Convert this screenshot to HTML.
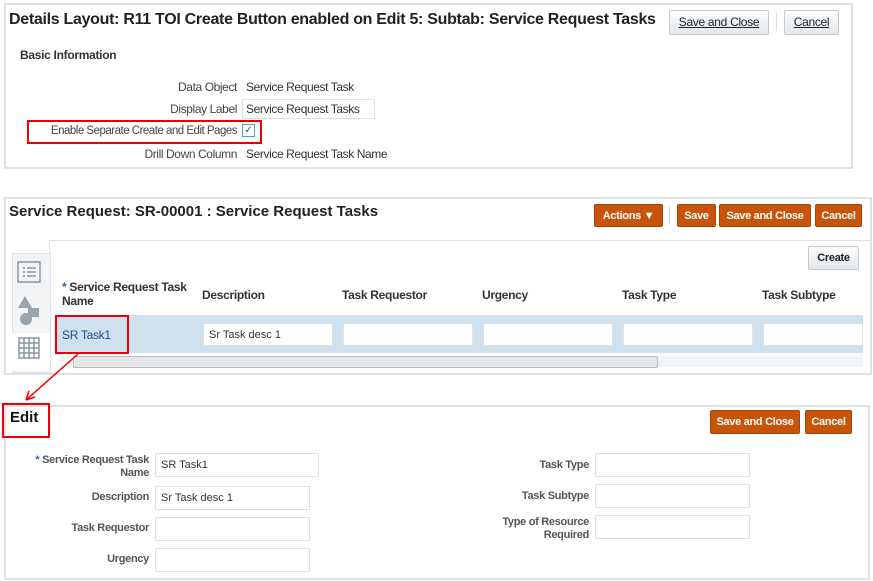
<!DOCTYPE html>
<html><head><style>
body{margin:0;width:873px;height:581px;background:#fff;font-family:"Liberation Sans",sans-serif;position:relative;overflow:hidden;font-size:12px;color:#333}
div{white-space:nowrap}
.a{position:absolute}
.pn{position:absolute;border:2px solid #dde2e6;background:#fff}
.gb{position:absolute;background:linear-gradient(#fbfcfd,#e4e8eb);border:1px solid #c4cbd1;border-radius:2px;font-size:12px;color:#222;text-align:center;line-height:22px;text-decoration:underline;letter-spacing:-0.3px}
.ob{position:absolute;background:#c75409;border:1px solid #a84608;border-radius:2px;color:#fff;font-size:11px;font-weight:bold;text-align:center;line-height:22px;letter-spacing:-0.3px}
.lb{position:absolute;text-align:right;font-size:12px;color:#444;letter-spacing:-0.4px}
.in{position:absolute;border:1px solid #dde2e6;background:#fff;font-size:11px;box-sizing:border-box;padding-left:5px}
.h{position:absolute;font-weight:bold;font-size:12px;color:#333;letter-spacing:-0.3px}
.l3{position:absolute;text-align:right;font-size:11px;font-weight:bold;color:#555;letter-spacing:-0.3px}
</style></head><body>
<div class="pn" style="left:4px;top:3px;width:845px;height:162px"></div>
<div class="a" style="left:9px;top:11px;font-size:16px;font-weight:bold;color:#222;letter-spacing:-0.3px">Details Layout: R11 TOI Create Button enabled on Edit 5: Subtab: Service Request Tasks</div>
<div class="gb" style="left:669px;top:10px;width:98px;height:23px">Save and Close</div>
<div class="a" style="left:776px;top:13px;width:1px;height:18px;background:#ddd"></div>
<div class="gb" style="left:784px;top:10px;width:53px;height:23px">Cancel</div>
<div class="a" style="left:20px;top:48px;font-size:12px;font-weight:bold;color:#333;letter-spacing:-0.3px">Basic Information</div>
<div class="lb" style="left:40px;width:197px;top:80px">Data Object</div><div class="a" style="left:246px;top:80px;letter-spacing:-0.4px">Service Request Task</div>
<div class="lb" style="left:40px;width:197px;top:102px">Display Label</div><div class="in" style="left:242px;top:99px;width:133px;height:20px;font-size:12px;padding-left:3px;line-height:18px;letter-spacing:-0.4px">Service Request Tasks</div>
<div class="lb" style="left:30px;width:207px;top:125px;font-size:11.5px;letter-spacing:-0.5px">Enable Separate Create and Edit Pages</div>
<div class="a" style="left:242px;top:124px;width:11px;height:11px;border:1px solid #7a8ea8;font-size:10px;line-height:11px;text-align:center;color:#2a4a8a">✓</div>
<div class="a" style="left:27px;top:120px;width:231px;height:20px;border:2px solid #e00"></div>
<div class="lb" style="left:40px;width:197px;top:147px">Drill Down Column</div><div class="a" style="left:246px;top:147px;letter-spacing:-0.4px">Service Request Task Name</div>

<div class="pn" style="left:4px;top:197px;width:864px;height:174px"></div>
<div class="a" style="left:9px;top:203px;font-size:15px;font-weight:bold;color:#222">Service Request: SR-00001 : Service Request Tasks</div>
<div class="ob" style="left:594px;top:204px;width:67px;height:21px">Actions ▼</div>
<div class="a" style="left:669px;top:207px;width:1px;height:17px;background:#ccc"></div>
<div class="ob" style="left:677px;top:204px;width:37px;height:21px">Save</div>
<div class="ob" style="left:719px;top:204px;width:90px;height:21px">Save and Close</div>
<div class="ob" style="left:815px;top:204px;width:45px;height:21px">Cancel</div>
<div class="a" style="left:49px;top:240px;width:821px;height:131px;border-top:1px solid #dde2e6;border-left:1px solid #dde2e6"></div>
<div class="a" style="left:12px;top:253px;width:37px;height:118px;background:#f2f4f5;border:1px solid #dde2e6"></div>
<div class="a" style="left:12px;top:333px;width:38px;height:38px;background:#fff"></div>
<svg class="a" style="left:15px;top:258px" width="30" height="110"><g fill="none" stroke="#8a97a3" stroke-width="1.5"><rect x="3" y="4" width="22" height="20"/><path d="M8 10h2M12 10h9M8 14h2M12 14h9M8 18h2M12 18h9"/><rect x="4" y="80" width="20" height="20"/><path d="M4 85h20M4 90h20M4 95h20M9 80v20M14 80v20M19 80v20"/></g><path d="M10 38l7 12h-14z" fill="#9aa4ad"/><rect x="13" y="50" width="11" height="9" fill="#9aa4ad"/><circle cx="11" cy="61" r="6" fill="#9aa4ad"/></svg>
<div class="gb" style="left:808px;top:246px;width:49px;height:22px;font-weight:bold;font-size:11px;text-decoration:none">Create</div>
<div class="h" style="left:62px;top:280px;width:135px;line-height:14px;white-space:normal"><span style="color:#2a6ab0">*</span> Service Request Task Name</div>
<div class="h" style="left:202px;top:288px">Description</div>
<div class="h" style="left:342px;top:288px">Task Requestor</div>
<div class="h" style="left:482px;top:288px">Urgency</div>
<div class="h" style="left:622px;top:288px">Task Type</div>
<div class="h" style="left:762px;top:288px">Task Subtype</div>
<div class="a" style="left:55px;top:315px;width:808px;height:38px;background:#cfe0ef"></div>
<div class="a" style="left:62px;top:328px;color:#1f4e8a;font-size:12px;letter-spacing:-0.3px">SR Task1</div>
<div class="in" style="left:203px;top:323px;width:130px;height:23px;line-height:22px">Sr Task desc 1</div>
<div class="in" style="left:343px;top:323px;width:130px;height:23px"></div>
<div class="in" style="left:483px;top:323px;width:130px;height:23px"></div>
<div class="in" style="left:623px;top:323px;width:130px;height:23px"></div>
<div class="in" style="left:763px;top:323px;width:100px;height:23px"></div>
<div class="a" style="left:55px;top:315px;width:70px;height:35px;border:2px solid #e00"></div>
<div class="a" style="left:60px;top:356px;width:803px;height:11px;background:#f3f4f5"></div>
<div class="a" style="left:73px;top:356px;width:583px;height:10px;background:#e6e8ea;border:1px solid #b8bcc0;border-radius:2px"></div>
<svg class="a" style="left:0;top:345px" width="120" height="62"><path d="M78 9L26 55" stroke="#e00" stroke-width="1.5"/><path d="M26 55l3-9M26 55l9-3" stroke="#e00" stroke-width="1.5" fill="none"/></svg>

<div class="pn" style="left:4px;top:405px;width:862px;height:171px"></div>
<div class="a" style="left:10px;top:409px;font-size:15px;font-weight:bold;color:#111">Edit</div>
<div class="a" style="left:2px;top:403px;width:44px;height:31px;border:2px solid #e00"></div>
<div class="ob" style="left:710px;top:410px;width:88px;height:22px">Save and Close</div>
<div class="ob" style="left:805px;top:410px;width:45px;height:22px">Cancel</div>
<div class="l3" style="left:20px;width:129px;top:454px;line-height:13px;white-space:normal"><span style="color:#2a6ab0">*</span> Service Request Task Name</div>
<div class="in" style="left:155px;top:453px;width:164px;height:24px;line-height:23px">SR Task1</div>
<div class="l3" style="left:20px;width:129px;top:491px">Description</div>
<div class="in" style="left:155px;top:486px;width:155px;height:24px;line-height:23px">Sr Task desc 1</div>
<div class="l3" style="left:20px;width:129px;top:522px">Task Requestor</div>
<div class="in" style="left:155px;top:517px;width:155px;height:24px"></div>
<div class="l3" style="left:20px;width:129px;top:553px">Urgency</div>
<div class="in" style="left:155px;top:548px;width:155px;height:24px"></div>
<div class="l3" style="left:460px;width:129px;top:459px">Task Type</div>
<div class="in" style="left:595px;top:453px;width:155px;height:24px"></div>
<div class="l3" style="left:460px;width:129px;top:490px">Task Subtype</div>
<div class="in" style="left:595px;top:484px;width:155px;height:24px"></div>
<div class="l3" style="left:460px;width:129px;top:516px;line-height:13px;white-space:normal">Type of Resource Required</div>
<div class="in" style="left:595px;top:515px;width:155px;height:24px"></div>
</body></html>
